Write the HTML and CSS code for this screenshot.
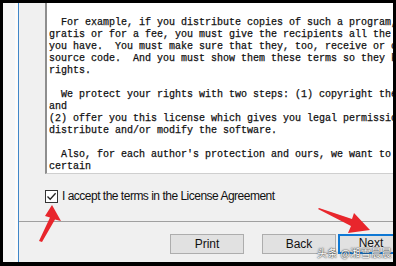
FILE: index.html
```html
<!DOCTYPE html>
<html>
<head>
<meta charset="utf-8">
<link rel="stylesheet" href="styles.css">
</head>
<body>
<div class="window">
  <div class="side"></div>
  <div class="main">
    <div class="license">
<pre class="license-text">  For example, if you distribute copies of such a program, whether
gratis or for a fee, you must give the recipients all the rights that
you have.  You must make sure that they, too, receive or can get the
source code.  And you must show them these terms so they know their
rights.

  We protect your rights with two steps: (1) copyright the software,
and
(2) offer you this license which gives you legal permission to copy,
distribute and/or modify the software.

  Also, for each author's protection and ours, we want to make
certain</pre>
    </div>
    <label class="accept">
      <span class="checkbox"><svg width="11" height="11" viewBox="0 0 11 11"><path d="M1.5 5.5 L4.2 8.3 L9.6 2.2" fill="none" stroke="#222" stroke-width="1.3"/></svg></span>
      <span class="accept-label">I accept the terms in the License Agreement</span>
    </label>
    <div class="separator"></div>
    <div class="buttons">
      <div class="btn">Print</div>
      <div class="btn btn-back">Back</div>
      <div class="btn btn-next">Next</div>
    </div>
  </div>
  <svg class="arrow arrow-left" width="30" height="40" viewBox="0 0 30 40">
    <polygon points="18,0 27,16 21,14.5 8,37 5,36 16,12.5 11,11" fill="#e8262c"/>
  </svg>
  <svg class="arrow arrow-right" width="56" height="30" viewBox="0 0 56 30">
    <polygon points="0,1 1,0 34,11 36,5 52,22 30,25 33,18" fill="#e8262c"/>
  </svg>
  <div class="watermark">头条 @湘雪晨晨</div>
</div>
</body>
</html>
```
FILE: styles.css
```css
html, body {
  margin: 0;
  padding: 0;
}
body {
  background: #000;
  padding: 3px 3px 4px 3px;
  width: 390px;
  height: 259px;
}
.window {
  position: relative;
  width: 390px;
  height: 259px;
  display: flex;
  overflow: hidden;
  background: #f0f0f0;
}
.side {
  width: 15px;
  flex: none;
  background: linear-gradient(to right, #f6f6f6 0, #f6f6f6 12px, #fbfbfb 12px);
  border-right: 1px solid #3f86c8;
}
.main {
  flex: 1;
  display: flex;
  flex-direction: column;
  min-width: 0;
}
.license {
  margin-left: 26px;
  width: 420px;
  height: 170px;
  background: #fff;
  border-left: 2px solid #8e8e8e;
  border-bottom: 1px solid #cfcfcf;
  box-sizing: content-box;
  overflow: hidden;
}
.license-text {
  margin: 0;
  padding: 14px 0 0 2px;
  font-family: "Liberation Mono", monospace;
  font-size: 10px;
  line-height: 12px;
  color: #111;
  white-space: pre;
  -webkit-text-stroke: 0.25px #111;
}
.accept {
  display: flex;
  align-items: center;
  margin: 16px 0 0 26px;
  height: 13px;
  gap: 4px;
}
.checkbox {
  width: 11px;
  height: 11px;
  border: 1px solid #333;
  background: #fff;
  display: flex;
  flex: none;
}
.accept-label {
  font-family: "Liberation Sans", Arial, sans-serif;
  font-size: 12px;
  letter-spacing: -0.5px;
  color: #111;
  white-space: nowrap;
  line-height: 13px;
}
.separator {
  margin-top: 18px;
  height: 0;
  border-top: 1px solid #a0a0a0;
}
.buttons {
  display: flex;
  margin: 12px 0 0 151px;
}
.btn {
  width: 72px;
  height: 18px;
  flex: none;
  border: 1px solid #adadad;
  background: #e1e1e1;
  font-family: "Liberation Sans", Arial, sans-serif;
  font-size: 12px;
  color: #111;
  display: flex;
  align-items: center;
  justify-content: center;
}
.btn-back {
  margin-left: 18px;
}
.btn-next {
  margin-left: 2px;
  width: 62px;
  height: 16px;
  border: 2px solid #0f78d4;
  align-items: flex-start;
}
.arrow {
  position: absolute;
  pointer-events: none;
}
.arrow-left {
  left: 31px;
  top: 202px;
}
.arrow-right {
  left: 315px;
  top: 205px;
}
.watermark {
  position: absolute;
  left: 314px;
  top: 244px;
  font-family: "Noto Sans CJK SC", sans-serif;
  font-size: 10px;
  line-height: 12px;
  letter-spacing: 0.4px;
  color: #fff;
  text-shadow: 0 0 1px #333, 0 0 2px #333;
  white-space: nowrap;
}
```
